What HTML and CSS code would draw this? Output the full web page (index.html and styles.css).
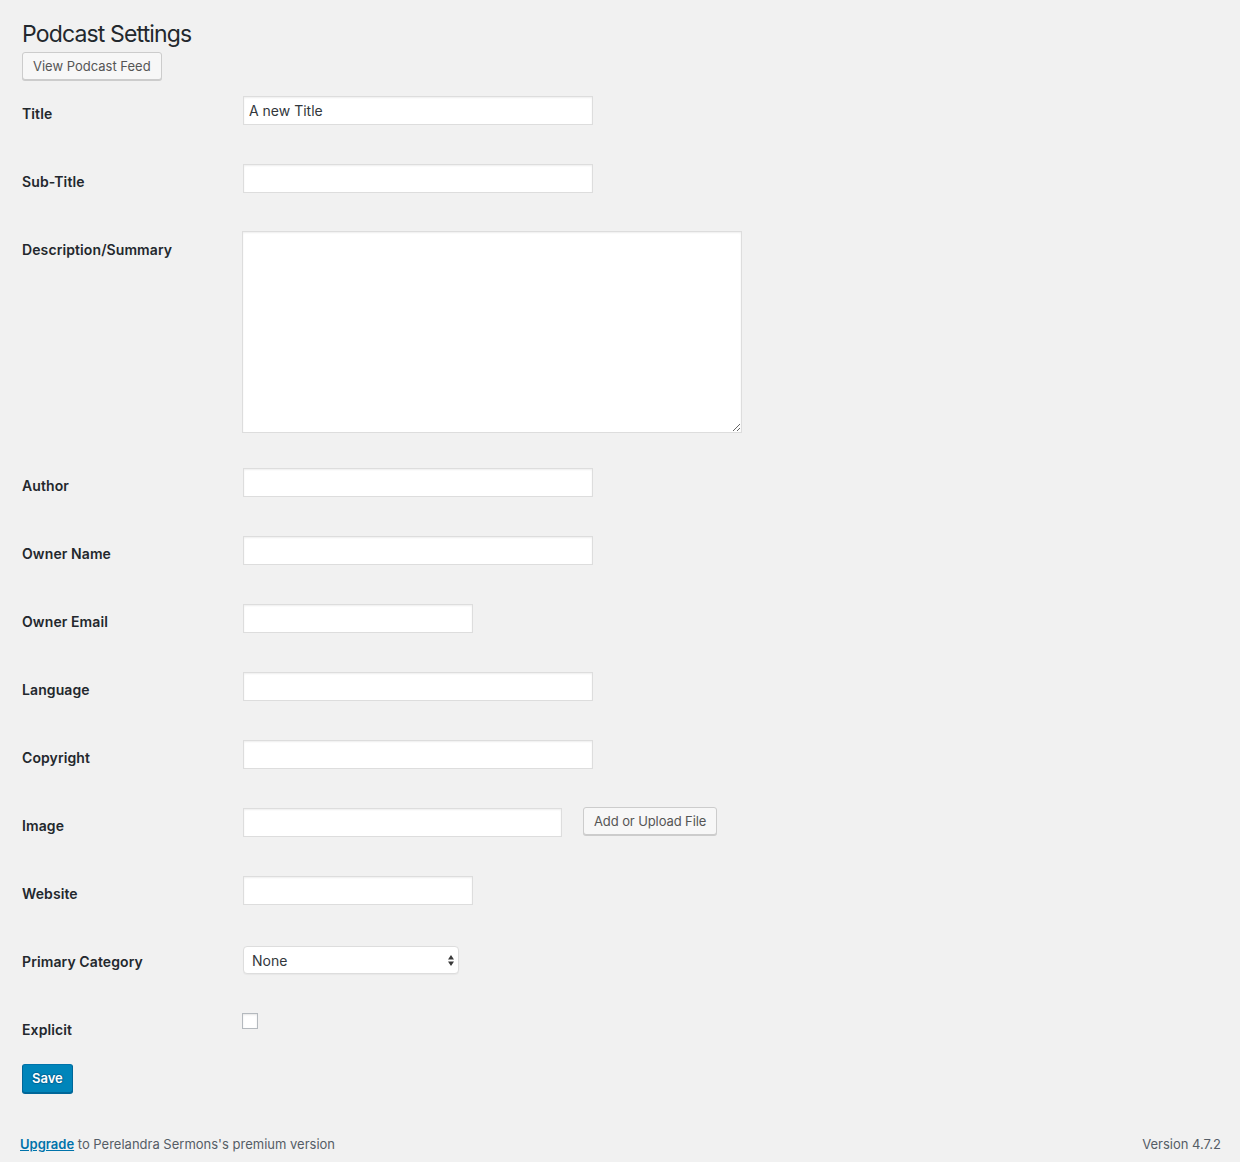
FILE: index.html
```html
<!DOCTYPE html>
<html lang="en">
<head>
<meta charset="utf-8">
<title>Podcast Settings</title>
<link rel="stylesheet" href="styles.css">
</head>
<body>
<div class="wrap">
  <h1 class="page-title">Podcast Settings</h1>
  <button class="btn" type="button">View Podcast Feed</button>

  <form class="form">
    <div class="row">
      <label class="label">Title</label>
      <div class="field"><input class="input regular" type="text" value="A new Title"></div>
    </div>
    <div class="row">
      <label class="label">Sub-Title</label>
      <div class="field"><input class="input regular" type="text"></div>
    </div>
    <div class="row row-tall">
      <label class="label">Description/Summary</label>
      <div class="field"><textarea class="textarea"></textarea></div>
    </div>
    <div class="row">
      <label class="label">Author</label>
      <div class="field"><input class="input regular" type="text"></div>
    </div>
    <div class="row">
      <label class="label">Owner Name</label>
      <div class="field"><input class="input regular" type="text"></div>
    </div>
    <div class="row">
      <label class="label">Owner Email</label>
      <div class="field"><input class="input small" type="text"></div>
    </div>
    <div class="row">
      <label class="label">Language</label>
      <div class="field"><input class="input regular" type="text"></div>
    </div>
    <div class="row">
      <label class="label">Copyright</label>
      <div class="field"><input class="input regular" type="text"></div>
    </div>
    <div class="row">
      <label class="label">Image</label>
      <div class="field field-inline">
        <input class="input medium" type="text">
        <button class="btn btn-upload" type="button">Add or Upload File</button>
      </div>
    </div>
    <div class="row">
      <label class="label">Website</label>
      <div class="field"><input class="input small" type="text"></div>
    </div>
    <div class="row">
      <label class="label">Primary Category</label>
      <div class="field field-select">
        <div class="select-wrap">
          <select class="select"><option>None</option></select>
          <svg class="select-arrows" width="6" height="11" viewBox="0 0 6 11"><path d="M3 0 L6 4.5 L0 4.5 Z M0 6.5 L6 6.5 L3 11 Z" fill="#3a3a3a"/></svg>
        </div>
      </div>
    </div>
    <div class="row row-check">
      <label class="label">Explicit</label>
      <div class="field field-check"><input class="checkbox" type="checkbox"></div>
    </div>
    <button class="btn-primary" type="button">Save</button>
  </form>
</div>
<div class="footer">
  <p class="footer-left"><a class="footer-link" href="#">Upgrade</a> to Perelandra Sermons's premium version</p>
  <p class="footer-right">Version 4.7.2</p>
</div>
</body>
</html>
```

FILE: styles.css
```css
html, body {
  margin: 0;
  padding: 0;
  background: #f1f1f1;
}
body {
  font-family: Inter, "Liberation Sans", sans-serif;
  color: #23282d;
  font-size: 13px;
}
.wrap {
  padding: 20px 0 0 22px;
}
.page-title {
  margin: 0;
  font-size: 23px;
  font-weight: 400;
  line-height: 29px;
  height: 29px;
  color: #23282d;
  letter-spacing: -0.85px;
}
.btn {
  display: block;
  margin-top: 3px;
  height: 28px;
  padding: 0 10px;
  font-family: inherit;
  font-size: 13px;
  color: #555;
  background: #f7f7f7;
  border: 1px solid #ccc;
  border-radius: 3px;
  box-shadow: 0 1px 0 #ccc;
  line-height: 26px;
  cursor: pointer;
  letter-spacing: 0;
}
.form {
  margin-top: 6px;
  display: flex;
  flex-direction: column;
}
.row {
  display: flex;
  height: 68px;
}
.row-tall {
  height: 236px;
}
.row-check {
  height: 62px;
}
.label {
  width: 221px;
  flex: none;
  padding-top: 19px;
  font-size: 14px;
  font-weight: 600;
  line-height: 18px;
  color: #23282d;
  letter-spacing: 0.1px;
}
.field {
  padding-top: 10px;
}
.field-inline {
  display: flex;
  align-items: flex-start;
  gap: 21px;
}
.input {
  box-sizing: border-box;
  height: 29px;
  margin: 0;
  padding: 0 5px;
  font-family: inherit;
  font-size: 14px;
  color: #32373c;
  background: #fff;
  border: 1px solid #ddd;
  box-shadow: inset 0 1px 2px rgba(0,0,0,.07);
  outline: none;
}
.regular { width: 350px; }
.small { width: 230px; }
.medium { width: 319px; }
.textarea {
  display: block;
  box-sizing: border-box;
  margin: -1px 0 0 -1px;
  width: 500px;
  height: 202px;
  background: #fff;
  border: 1px solid #ddd;
  box-shadow: inset 0 1px 2px rgba(0,0,0,.07);
  font-family: inherit;
  font-size: 14px;
}
.btn-upload {
  margin-top: -1px;
  letter-spacing: -0.1px;
}
.field-select {
  padding-top: 12px;
}
.select-wrap {
  position: relative;
  width: 216px;
  height: 28px;
}
.select {
  appearance: none;
  -webkit-appearance: none;
  box-sizing: border-box;
  width: 216px;
  height: 28px;
  margin: 0;
  padding: 0 8px;
  font-family: inherit;
  font-size: 14px;
  color: #32373c;
  background: #fff;
  border: 1px solid #ddd;
  border-radius: 4px;
  box-shadow: 0 1px 1px rgba(0,0,0,.04);
  outline: none;
}
.select-arrows {
  position: absolute;
  right: 5px;
  top: 9px;
  pointer-events: none;
}
.field-check {
  padding-top: 11px;
  margin-left: -1px;
}
.checkbox {
  appearance: none;
  -webkit-appearance: none;
  display: block;
  box-sizing: border-box;
  width: 16px;
  height: 16px;
  margin: 0;
  background: #fff;
  border: 1px solid #b4b9be;
  box-shadow: inset 0 1px 2px rgba(0,0,0,.1);
}
.btn-primary {
  align-self: flex-start;
  box-sizing: border-box;
  height: 29px;
  padding: 0 9px;
  font-family: inherit;
  font-size: 13px;
  font-weight: 600;
  color: #fff;
  background: #0085ba;
  border: 1px solid;
  border-color: #0073aa #006799 #006799;
  border-radius: 3px;
  box-shadow: 0 1px 0 #006799;
  text-shadow: 0 -1px 1px #006799, 1px 0 1px #006799, 0 1px 1px #006799, -1px 0 1px #006799;
  line-height: 27px;
  cursor: pointer;
}
.footer {
  display: flex;
  justify-content: space-between;
  padding: 0 19px 0 20px;
  margin-top: 42px;
  color: #555d66;
  font-size: 13px;
  line-height: 18px;
}
.footer-left, .footer-right {
  margin: 0;
}
.footer-link {
  color: #0073aa;
  font-weight: 600;
  text-decoration: underline;
}
```
